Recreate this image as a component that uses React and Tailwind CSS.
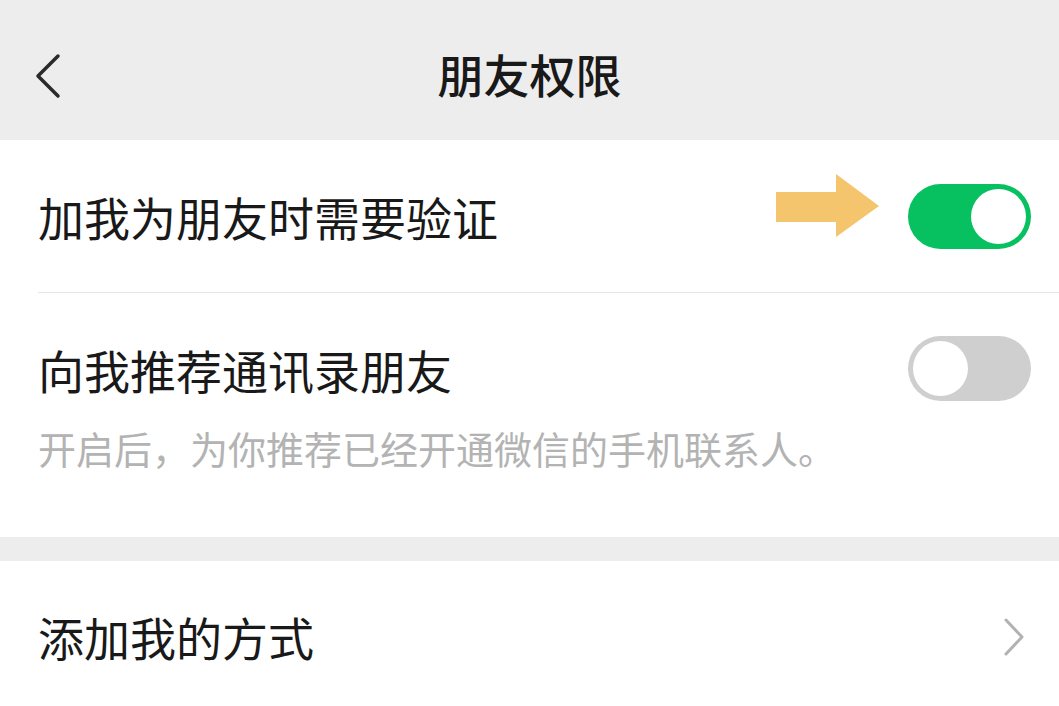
const font = { fontFamily: '"Noto Sans CJK SC", "Noto Sans", sans-serif' }

function Toggle({ on }) {
  return on ? (
    <div className="w-[123px] h-[65px] rounded-full bg-[#07c160] flex items-center justify-end p-[5px] shrink-0">
      <div className="w-[55px] h-[55px] rounded-full bg-white" />
    </div>
  ) : (
    <div className="w-[123px] h-[65px] rounded-full bg-[#cfcfcf] flex items-center justify-start p-[5px] shrink-0">
      <div className="w-[55px] h-[55px] rounded-full bg-white" />
    </div>
  )
}

function Arrow() {
  return (
    <svg width="104" height="64" viewBox="0 0 104 64" className="shrink-0">
      <polygon points="0,18 60,18 60,0 103,32 60,63 60,48 0,48" fill="#f4c56d" />
    </svg>
  )
}

export default function App() {
  return (
    <div className="w-[1059px] h-[706px] overflow-hidden bg-[#ededed] text-[#191919]" style={font}>
      <div className="relative h-[140px] flex items-center justify-center">
        <svg width="30" height="46" viewBox="0 0 30 46" className="absolute left-[33px] top-[53px]">
          <polyline points="25,3 5,23 25,43" fill="none" stroke="#2a2a2a" strokeWidth="3.5" strokeLinecap="round" strokeLinejoin="round" />
        </svg>
        <h1 className="text-[46px] font-medium leading-none mt-[6px]">朋友权限</h1>
      </div>

      <div className="bg-white">
        <div className="h-[152px] pl-[38px] pr-[28px] flex items-center">
          <span className="text-[46px] leading-none flex-1">加我为朋友时需要验证</span>
          <div className="mr-[28px] -mt-[21px]">
            <Arrow />
          </div>
          <Toggle on />
        </div>
        <div className="ml-[38px] h-px bg-[#e6e6e6]" />
        <div className="pl-[38px] pr-[28px] pt-[43px] pb-[65px]">
          <div className="flex items-center h-[65px]">
            <span className="text-[46px] leading-none flex-1">向我推荐通讯录朋友</span>
            <Toggle />
          </div>
          <p className="mt-[23px] text-[38px] leading-[48px] text-[#b3b3b3]">
            开启后，为你推荐已经开通微信的手机联系人。
          </p>
        </div>
      </div>

      <div className="h-[24px]" />

      <div className="bg-white h-[160px] pl-[38px] pr-[34px] flex items-start pt-[52px]">
        <span className="text-[46px] leading-none flex-1">添加我的方式</span>
        <svg width="22" height="38" viewBox="0 0 22 38" className="mt-[5px]">
          <polyline points="3,2 19,19 3,36" fill="none" stroke="#b2b2b2" strokeWidth="3" strokeLinecap="round" strokeLinejoin="round" />
        </svg>
      </div>
    </div>
  )
}
